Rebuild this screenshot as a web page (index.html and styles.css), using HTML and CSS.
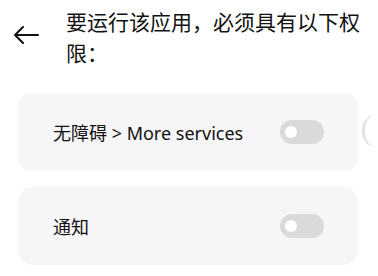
FILE: index.html
```html
<!DOCTYPE html>
<html lang="zh">
<head>
<meta charset="utf-8">
<link rel="stylesheet" href="styles.css">
</head>
<body>
<div class="page">
  <header class="header">
    <button class="back" aria-label="返回">
      <svg width="27" height="18" viewBox="0 0 27 18"><path d="M25 9H2M10 1L2 9L10 17" fill="none" stroke="#111" stroke-width="2" stroke-linecap="round" stroke-linejoin="round"/></svg>
    </button>
    <h1 class="title">要运行该应用，必须具有以下权限：</h1>
  </header>
  <div class="list">
    <div class="card">
      <span class="label">无障碍 &gt; More services</span>
      <span class="switch"><span class="knob"></span></span>
    </div>
    <div class="card">
      <span class="label">通知</span>
      <span class="switch"><span class="knob"></span></span>
    </div>
  </div>
  <div class="peek"></div>
</div>
</body>
</html>
```
FILE: styles.css
```css
* { box-sizing: border-box; }
html, body { margin: 0; padding: 0; background: #fff; }
body {
  font-family: "Noto Sans", "Noto Sans CJK SC", sans-serif;
  color: #111;
  width: 378px;
  height: 276px;
  overflow: hidden;
}
.page { position: relative; padding: 0 20px 0 18px; }
.header {
  display: flex;
  align-items: flex-start;
  padding-top: 7px;
}
.back {
  flex: none;
  width: 43px;
  border: 0;
  background: none;
  padding: 19px 0 0 0;
  margin-left: -5px;
  display: flex;
  justify-content: flex-start;
}
.title {
  flex: none;
  margin: 0 0 0 10px;
  font-size: 21px;
  font-weight: 400;
  line-height: 31px;
  width: 298px;
}
.list {
  display: flex;
  flex-direction: column;
  gap: 16px;
  margin-top: 24px;
}
.card {
  height: 78px;
  background: #f6f5f8;
  border-radius: 15px;
  display: flex;
  align-items: center;
  justify-content: space-between;
  padding: 0 34px 0 35px;
}
.label { font-size: 18px; }
.switch {
  width: 44px;
  height: 24px;
  border-radius: 12px;
  background: #dadada;
  display: flex;
  align-items: center;
  padding-left: 5px;
}
.knob {
  width: 12px;
  height: 12px;
  border-radius: 50%;
  background: #fff;
}
.peek {
  position: absolute;
  left: 362px;
  top: 114px;
  width: 30px;
  height: 34px;
  border-left: 3px solid #e2e2e2;
  border-radius: 16px 0 0 16px;
}
```
